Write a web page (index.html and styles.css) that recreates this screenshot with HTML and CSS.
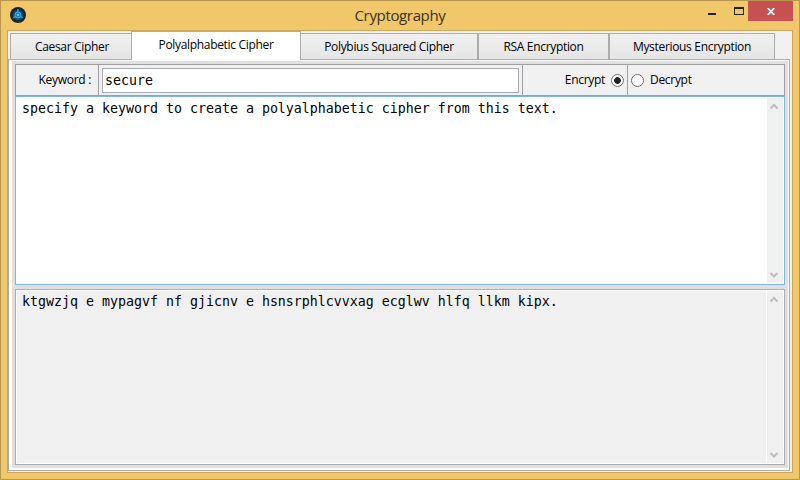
FILE: index.html
```html
<!DOCTYPE html>
<html lang="en">
<head>
<meta charset="utf-8">
<title>Cryptography</title>
<link rel="stylesheet" href="styles.css">
</head>
<body>
<div class="window">
  <header class="titlebar">
    <svg class="app-icon" width="16" height="16" viewBox="0 0 16 16">
      <circle cx="8" cy="8" r="8" fill="#182531"/>
      <circle cx="8" cy="8" r="5.4" fill="#164c70"/>
      <path d="M8 2v4M3 11l3-2M13 11l-3-2" stroke="#2d9bd0" stroke-width="1.5"/>
      <circle cx="8" cy="8" r="3" fill="#1682b8" stroke="#35b4e8"/>
      <circle cx="8" cy="8" r="1" fill="#75d5f4"/>
    </svg>
    <h1 class="title">Cryptography</h1>
    <div class="controls">
      <svg class="minmax" width="60" height="20" viewBox="0 0 60 20" shape-rendering="crispEdges">
        <path d="M16 12h8v2h-8zM42 6h10v8H42zM43 8v5h8V8z" fill="#222" fill-rule="evenodd"/>
      </svg>
      <div class="close">
        <svg width="8" height="7" viewBox="0 0 8 7"><path d="M.7 0l6.6 7M7.3 0L.7 7" stroke="#fff" stroke-width="1.8"/></svg>
      </div>
    </div>
  </header>
  <main class="client">
    <nav class="tabs">
      <div class="tab caesar"><span>Caesar Cipher</span></div>
      <div class="tab poly selected"><span>Polyalphabetic Cipher</span></div>
      <div class="tab polybius"><span>Polybius Squared Cipher</span></div>
      <div class="tab rsa"><span>RSA Encryption</span></div>
      <div class="tab myst"><span>Mysterious Encryption</span></div>
    </nav>
    <section class="pane">
      <div class="content">
        <div class="toolbar">
          <div class="cell label"><span>Keyword :</span></div>
          <div class="cell field"><div class="input">secure</div></div>
          <div class="cell encrypt"><span>Encrypt</span><i class="radio on"></i></div>
          <div class="cell decrypt"><i class="radio"></i><span>Decrypt</span></div>
        </div>
        <div class="area source">
          <p>specify a keyword to create a polyalphabetic cipher from this text.</p>
          <div class="scroll">
            <svg width="16" height="16" viewBox="0 0 16 16"><path d="M4.5 10.5L8 7l3.5 3.5" /></svg>
            <svg width="16" height="16" viewBox="0 0 16 16"><path d="M4.5 6L8 9.5L11.5 6" /></svg>
          </div>
        </div>
        <div class="area result">
          <p>ktgwzjq e mypagvf nf gjicnv e hsnsrphlcvvxag ecglwv hlfq llkm kipx.</p>
          <div class="scroll">
            <svg width="16" height="16" viewBox="0 0 16 16"><path d="M4.5 10.5L8 7l3.5 3.5" /></svg>
            <svg width="16" height="16" viewBox="0 0 16 16"><path d="M4.5 6L8 9.5L11.5 6" /></svg>
          </div>
        </div>
      </div>
    </section>
  </main>
</div>
</body>
</html>
```
FILE: styles.css
```css
* { box-sizing: border-box; }
body { margin: 0; font: 12px/16px "Open Sans", "Noto Sans", sans-serif; color: #000; }
.window { width: 800px; height: 480px; padding: 0 6px 6px; background: #f0c869; border: 1px solid #b89850; }
.titlebar { height: 29px; display: grid; grid-template-columns: 130px 1fr 130px; }
.app-icon { margin: 6px 0 0 3px; }
.title { margin: 4px 0 0; font-size: 15px; line-height: 20px; font-weight: 400; text-align: center; color: #3c3220; letter-spacing: -.35px; }
.controls { display: flex; justify-content: flex-end; }
.minmax { flex: none; margin-right: -4px; }
.close { width: 45px; height: 20px; background: #c75050; display: flex; align-items: center; justify-content: center; }
.client { height: 443px; border: 1px solid #cba85b; background: #f0f0f0; padding: 0 2px 1px 0; display: flex; flex-direction: column; }
.tabs { height: 28px; flex: none; display: flex; align-items: flex-end; padding-left: 2px; }
.tab { position: relative; height: 27px; margin-bottom: -1px; border: 1px solid #acacac; background: linear-gradient(#f0f0f0, #e5e5e5); text-align: center; padding-top: 5px; white-space: nowrap; }
.tab span { letter-spacing: -.32px; }
.caesar { width: 121px; border-right: 0; padding-left: 2px; }
.poly { width: 170px; }
.polybius { width: 177px; border-left: 0; }
.rsa { width: 131px; }
.myst { width: 166px; }
.selected { height: 29px; background: #fff; border-bottom: 0; z-index: 1; }
.pane { flex: 1; border: 1px solid #acacac; background: #fff; padding: 1px 1px 2px 3px; }
.content { height: 100%; background: #e0e0e0; padding: 3px; display: flex; flex-direction: column; }
.toolbar { height: 32px; flex: none; display: flex; border: 1px solid #a0a0a0; background: #f0f0f0; }
.cell { display: flex; align-items: center; border-right: 1px solid #a0a0a0; }
.cell:last-child { border: 0; }
.label { width: 83px; justify-content: flex-end; padding-right: 7px; }
.field { width: 424px; padding: 0 3px; }
.input { width: 418px; height: 25px; border: 1px solid #abadb3; background: #fff; padding-left: 2px; font: 13.29px/23px "DejaVu Sans Mono", monospace; }
.encrypt { width: 105px; justify-content: flex-end; padding-right: 3px; gap: 6px; }
.decrypt { flex: 1; padding-left: 3px; gap: 6px; }
.cell span { letter-spacing: -.3px; }
.radio { width: 13px; height: 13px; border: 1px solid #707070; border-radius: 50%; background: #fff; }
.radio.on { background: radial-gradient(circle, #222 3px, #fff 3.7px); }
.area { display: flex; justify-content: space-between; font: 13.29px/16px "DejaVu Sans Mono", monospace; padding: 1px; }
.area p { margin: 3px 0 0 5px; white-space: nowrap; }
.source { height: 189px; border: 1px solid #7eb4ea; background: #fff; }
.result { height: 176px; margin-top: 4px; border: 1px solid #abadb3; background: #f0f0f0; box-shadow: inset 0 0 0 1px #fff; }
.scroll { width: 17px; background: #f0f0f0; border-left: 1px solid #fff; display: flex; flex-direction: column; justify-content: space-between; }
.scroll svg { margin-left: -1px; }
.scroll path { fill: none; stroke: #bdbdbd; stroke-width: 2; }
```
